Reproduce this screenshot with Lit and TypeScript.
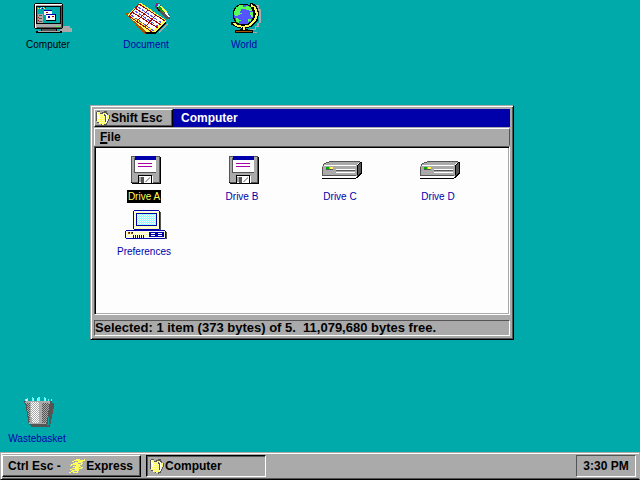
import { LitElement, html, css, svg, nothing } from "lit";
import { customElement, property } from "lit/decorators.js";

const px = (fill: string, d: string) => svg`<path fill=${fill} d=${d}></path>`;

// Every other pixel of the icon grid, used for two-colour dithering.
let checker = "";
for (let y = 0; y < 32; y++) {
  for (let x = y % 2; x < 48; x += 2) checker += `M${x} ${y}h1v1h-1z`;
}

const dither = (id: string, a: string, b: string, d: string) => svg`
  <clipPath id=${id}><path d=${d}></path></clipPath>
  <path fill=${a} d=${d}></path>
  <path fill=${b} d=${checker} clip-path="url(#${id})"></path>
`;

const floppy = svg`
  ${px("#000", "M12 28H40V2H41V29H12ZM11 27H12V28H11Z")}
  ${px("#555", "M11 1H40V28H12V27H11Z")}
  ${px("#aaa", "M12 2H39V27H12Z")}
  ${px("#555", "M14 3H15V18H14ZM15 17H36V18H15Z")}
  ${px("#00a", "M15 1H36V5H15Z")}
  ${px("#fdfdfd", "M15 5H36V17H15Z")}
  ${px("#a0a", "M18 8H32V9H18ZM18 11H32V12H18Z")}
  ${px("#000", "M18 20H32V21H18ZM18 20H19V28H18ZM31 20H32V28H31Z")}
  ${px("#fff", "M19 21H31V28H19ZM32 21H33V28H32Z")}
  ${px("#555", "M21 22H24V28H21Z")}
  ${px("#aaa", "M25 26H26V25H27V24H28V23H29V22H30V24H29V25H28V26H27V27H25ZM19 22H21V27H19Z")}
`;

const drive = svg`
  ${px("#555", "M13 6H44V7H13ZM10 7H13V8H10ZM8 8H10V9H8ZM7 9H8V11H7ZM6 12H7V21H6Z")}
  ${px("#aaa", "M13 7H44V8H42V9H41V22H7V12H6V11H8V9H10V8H13Z")}
  ${px("#fff", "M8 10H40V11H8ZM20 14H39V15H20ZM20 17H39V18H20ZM7 21H41V22H7ZM41 20H42V19H43V18H44V19H43V20H42V21H41Z")}
  ${px("#555", "M42 9H43V8H45V18H44V19H43V20H42V21H41V10H42ZM20 15H39V16H20ZM6 20H40V21H6Z")}
  ${px("#000", "M6 23H42V22H43V21H44V20H45V19H46V7H44V8H45V18H44V19H43V20H42V21H41V22H40V24H6ZM41 10H42V9H43V8H44V9H43V10H42V20H41Z")}
  ${px("#0a0", "M10 12H13V14H10Z")}
  ${px("#ff5", "M14 12H17V14H14Z")}
  ${px("#555", "M10 14H17V15H10Z")}
`;

const preferences = svg`
  ${px("#555", "M15 19H40V2H41V20H15ZM7 29H47V22H46V28H7Z")}
  ${px("#00a", "M14 0H39V1H40V19H39V20H34V21H19V20H14V19H13V1H14Z")}
  ${dither("case", "#fdfdfd", "#ffffaa", "M14 1H39V19H14Z")}
  ${px("#00a", "M16 3H37V16H16Z")}
  ${dither("screen", "#fdfdfd", "#88ffff", "M17 4H36V15H17Z")}
  ${px("#00a", "M6 20H45V21H46V28H45V29H6V28H5V21H6Z")}
  ${dither("base", "#fdfdfd", "#ffffaa", "M6 21H45V28H6Z")}
  ${px("#a50", "M8 22H10V24H8ZM11 22H13V24H11Z")}
  ${px("#000", "M9 22H10V23H9ZM12 22H13V23H12Z")}
  ${px("#00a", "M13 25H14V28H13ZM15 25H16V28H15ZM17 25H18V28H17ZM19 25H20V28H19ZM21 25H22V28H21ZM23 25H24V28H23ZM29 22H44V27H29Z")}
  ${px("#fff", "M31 23H35V24H31ZM38 23H42V24H38ZM31 25H35V26H31ZM38 25H42V26H38Z")}
`;

const computer = svg`
  ${px("#aaa", "M39 23H46V25H48V29H36V25H39Z")}
  ${px("#000", "M11 0H38V1H39V25H38V26H33V28H38V30H12V28H17V26H11V25H10V1H11Z")}
  ${px("#aaa", "M12 1H38V25H12ZM14 28H36V29H14Z")}
  ${px("#fff", "M11 1H38V2H12V25H11Z")}
  ${px("#555", "M13 24H38V25H13ZM18 26H32V28H18ZM37 2H38V25H37Z")}
  ${px("#000", "M12 3H37V21H12Z")}
  ${px("#0aa", "M13 4H36V20H13Z")}
  ${px("#ff5", "M14 5H15V6H14ZM17 4H18V5H17ZM20 5H21V6H20Z")}
  ${px("#00a", "M15 4H16V5H15ZM18 5H19V6H18ZM21 4H22V5H21Z")}
  ${px("#fff", "M16 5H17V6H16ZM19 4H20V5H19Z")}
  ${px("#aaa", "M14 11H19V20H14Z")}
  ${px("#555", "M15 12H18V13H15ZM15 15H18V16H15ZM15 18H18V19H15Z")}
  ${px("#a00", "M14 14H15V15H14ZM14 17H15V18H14Z")}
  ${px("#fff", "M20 7H28V12H20ZM22 11H31V17H22Z")}
  ${px("#00a", "M20 7H28V8H20ZM22 11H32V12H22ZM24 13H26V15H24Z")}
  ${px("#a00", "M22 9H24V10H22ZM28 13H30V14H28Z")}
  ${px("#000", "M22 17H32V18H22ZM31 12H32V18H31Z")}
  ${px("#5f5", "M32 23H35V24H32Z")}
`;

const documentIcon = svg`
  ${px("#aaa", "M36 29L46 19V21L38 30ZM40 4L49 14V16H44Z")}
  ${px("#a50", "M2 10H8L24 29V31H22L14 22L8 15Z")}
  ${px("#000", "M23 29H33L44 18V20L34 31H24Z")}
  ${px("#ff5", "M5 12L17 0H19L44 17V18L33 29H25Z")}
  ${px("#fdfdfd", "M8 12L17 2L41 17L32 27Z")}
  <path fill="none" stroke="#a00" d="M17 1L43 18M13 5L39 22M10 9L36 25M7 13L30 29M17 1L7 13M26 7L15 18M34 12L23 24"></path>
  <path fill="none" stroke="#55f" stroke-dasharray="3 2" d="M16 4L40 20M13 8L37 24M9 12L32 28"></path>
  ${px("#555", "M34 0H38V2L44 8L49 14V16H45L37 9L33 4Z")}
  ${px("#a0a", "M34 1H36V3H34Z")}
  ${px("#5ff", "M36 1H38V3L35 5V3H36Z")}
  ${px("#000", "M35 4H36V6H37V7H38V8H36V6H35Z")}
  ${px("#0a0", "M36 4L38 3L43 9L41 10Z")}
  ${px("#ff5", "M38 3L39 3L45 9L43 10Z")}
  ${px("#fff", "M43 10L45 9L48 14L46 14Z")}
`;

const world = svg`<g transform="translate(1 0)">
  ${px("#aaa", "M34 2H38V6H40V20H38V24H35V27H29V26H34V23H36V20H38V8H36V4H34ZM22 29H36V30H22Z")}
  ${px("#000", "M18 1H27V2H29V3H31V5H32V7H33V15H32V17H31V19H29V21H27V22H18V21H16V20H14V18H13V16H12V7H13V5H14V4H15V3H16V2H18Z")}
  ${px("#55f", "M18 2H27V3H29V4H30V6H31V8H32V15H31V17H30V19H28V20H27V21H18V20H16V19H15V17H14V15H13V8H14V6H15V4H17V3H18Z")}
  ${px("#5f5", "M18 2H22V4H24V6H20V8H19V10H21V11H19V12H17V13H14V12H13V8H14V6H15V4H17V3H18ZM25 3H28V4H30V6H31V8H28V7H25V6H24V4H25ZM29 9H32V14H30V12H29ZM15 15H17V16H18V17H20V18H18V20H17V19H15ZM27 16H30V18H28V19H27Z")}
  <path fill="none" stroke="#000" stroke-width="4" d="M29 1L34 4L36 10L35 17L30 22L23 24L17 23L12 20"></path>
  <path fill="none" stroke="#ff5" stroke-width="2" d="M30 2L34 5L36 11L34 17L29 22L23 24L17 23L12 20"></path>
  <path fill="none" stroke="#000" stroke-width="1" d="M32 4L34 10L32 17L28 21L23 22"></path>
  ${px("#000", "M10 19H14V20H12V22H10ZM21 24H25V26H27V27H19V26H21ZM14 27H32V30H14Z")}
  ${px("#ff5", "M22 24H24V27H22Z")}
  ${px("#a50", "M15 28H31V29H15Z")}
</g>`;

const basket = svg`
  ${px("#555", "M36 6H41V12H40V17H39V22H38V27H37V30H18V28H36Z")}
  ${px("#5ff", "M14 1H15V4H14ZM19 0H20V4H19ZM25 0H27V4H25ZM31 0H32V4H31ZM35 2H36V5H35ZM38 2H39V5H38ZM12 2H13V4H12Z")}
  ${px("#fff", "M13 2H14V4H13ZM20 1H21V4H20ZM24 1H25V4H24ZM32 1H33V4H32Z")}
  ${px("#555", "M11 4H39V6H38V8H37V14H36V20H35V27H34V28H16V26H15V20H14V14H13V8H12V6H11Z")}
  ${px("#aaa", "M13 4H37V7H36V14H35V20H34V26H33V27H16V20H15V14H14V8H13V6H12V5H13Z")}
  ${dither("light", "#fdfdfd", "#aaa", "M18 5H26V26H19V20H18Z")}
  ${dither("shade", "#aaa", "#555", "M29 6H36V14H35V20H34V26H29ZM13 6H17V26H16V20H15V14H14V8H13Z")}
`;

const folder = svg`
  ${px("#555", "M1 2H2V1H5V3H7V2H9V1H12V3H13V5H15V9H14V11H13V13H12V15H10V16H9V15H6V14H4V13H2V11H1Z")}
  ${dither("paper", "#ffffaa", "#ffff55", "M2 2H5V4H8V3H11V14H9V15H7V14H4V12H2Z")}
  ${px("#ff5", "M12 5H14V9H13V11H12Z")}
  ${px("#fff", "M2 2H3V5H4V8H5V11H4V9H3V6H2ZM11 4H12V13H11Z")}
  ${px("#555", "M9 4H10V5H11V12H10V6H9Z")}
`;

const express = svg`
  ${px("#ff5", "M7 1H11V2H15V1H16V3H14V4H9V3H5V4H3V3H5V2H7ZM4 5H9V6H12V5H14V6H13V7H11V8H7V7H3V8H1V7H2V6H4ZM6 9H10V10H12V9H14V10H13V11H10V12H6V11H3V12H1V11H3V10H6ZM2 13H5V14H8V13H9V15H4V14H2V15H0V14H2Z")}
  ${px("#ff5", "M6 4H13V5H6ZM4 8H12V9H4ZM3 12H10V13H3Z")}
`;

const pictures: Record<string, unknown> = {
  floppy, drive, preferences, computer, document: documentIcon, world, basket, folder, express,
};

@customElement("pixel-icon")
class PixelIcon extends LitElement {
  @property() name = "";
  @property({ type: Boolean }) small = false;

  static styles = css`
    :host { display: block; flex: none; }
    svg { display: block; shape-rendering: crispEdges; }
  `;

  render() {
    const w = this.small ? 16 : 48;
    const h = this.small ? 16 : 32;
    return html`<svg width=${w} height=${h} viewBox="0 0 ${w} ${h}" aria-hidden="true">
      ${pictures[this.name] ?? nothing}
    </svg>`;
  }
}

@customElement("icon-item")
class IconItem extends LitElement {
  @property() icon = "";
  @property() label = "";
  @property({ type: Boolean }) selected = false;
  @property({ type: Boolean }) dark = false;

  static styles = css`
    :host { display: block; }
    .item {
      display: flex; flex-direction: column; align-items: center; gap: 3px;
      width: 100%; margin: 0; padding: 0; border: 0; background: none;
      font: 10px/12px "Liberation Sans", sans-serif; color: #0000aa;
    }
    .label { white-space: nowrap; padding: 1px 1px 0; }
    .dark { color: #000; }
    .selected { background: #000; color: #ffff55; }
  `;

  render() {
    const tone = this.selected ? "label selected" : this.dark ? "label dark" : "label";
    return html`<button class="item">
      <pixel-icon name=${this.icon}></pixel-icon>
      <span class=${tone}>${this.label}</span>
    </button>`;
  }
}

@customElement("app-root")
class AppRoot extends LitElement {
  static styles = css`
    :host {
      display: flex; flex-direction: column; height: 100vh; overflow: hidden;
      background: #00aaaa; color: #000;
      font: bold 12px/16px "Liberation Sans", sans-serif;
      cursor: default;
    }
    button { font: inherit; color: inherit; margin: 0; text-align: left; }
    .desktop { position: relative; flex: 1; min-height: 0; }
    .shortcuts { display: flex; gap: 2px; padding-top: 3px; }
    .shortcuts icon-item { width: 96px; }
    .bin { position: absolute; left: 0; bottom: 7px; width: 74px; }

    .window {
      position: absolute; inset: 105px 126px 112px 90px; box-sizing: border-box;
      display: flex; flex-direction: column;
      padding: 3px; background: #aaa;
      border: 1px solid; border-color: #aaa #000 #000 #aaa;
      box-shadow: inset 1px 1px #fff, inset -1px -1px #555;
    }
    .titlebar { display: flex; height: 18px; margin-bottom: 1px; }
    .control {
      display: flex; align-items: center; box-sizing: border-box; width: 79px; padding: 0;
      background: #aaa; border: 1px solid; border-color: #fff #000 #000 #fff;
      box-shadow: inset -1px -1px #555; white-space: nowrap;
    }
    .title {
      flex: 1; margin: 0; padding-left: 8px; background: #0000aa; color: #fff;
      font: inherit; line-height: 18px;
    }
    .menubar {
      display: flex; height: 16px; border: 1px solid;
      border-color: #fff #555 transparent #fff;
    }
    .menu { padding: 0 5px; border: 0; background: none; }
    .key { text-decoration: underline; text-decoration-thickness: 2px; text-underline-offset: 1px; }
    .pane {
      flex: 1; min-height: 0; background: #fdfdfd;
      border: 1px solid; border-color: #555 #fff #fff #555;
      box-shadow: inset 1px 1px #000, inset -1px -1px #aaa;
      display: flex; flex-wrap: wrap; align-content: flex-start;
      gap: 7px 2px; padding: 8px 1px 1px 1px;
    }
    .pane icon-item { width: 96px; }
    .status {
      height: 14px; margin-top: 5px; font-size: 13px; line-height: 14px;
      border: 1px solid; border-color: #555 #fff #fff #555; white-space: pre;
    }

    .taskbar {
      display: flex; align-items: center; gap: 5px; height: 28px; box-sizing: border-box;
      padding: 1px 3px 1px 1px; background: #aaa;
      border: 1px solid; border-color: #aaa #aaa #000 #aaa;
      box-shadow: inset 1px 1px #fff, inset 0 -1px #555;
    }
    .start, .task, .clock { box-sizing: border-box; height: 22px; border: 1px solid; white-space: nowrap; }
    .start, .task { display: flex; align-items: center; background: #aaa; }
    .start {
      width: 139px; padding: 0 7px 0 5px; gap: 1px; border-color: #fff #000 #000 #fff;
      box-shadow: inset -1px -1px #555;
    }
    .hint { flex: 1; }
    .task {
      width: 120px; padding: 0 2px; border-color: #000 #fff #fff #000;
      box-shadow: inset 1px 1px #555;
    }
    .clock {
      margin-left: auto; width: 60px; text-align: center; line-height: 20px;
      border-color: #555 #fff #fff #555;
    }
  `;

  private items = [
    { icon: "floppy", label: "Drive A", selected: true },
    { icon: "floppy", label: "Drive B" },
    { icon: "drive", label: "Drive C" },
    { icon: "drive", label: "Drive D" },
    { icon: "preferences", label: "Preferences" },
  ];

  render() {
    return html`
      <main class="desktop">
        <nav class="shortcuts" aria-label="Desktop">
          <icon-item icon="computer" label="Computer" dark></icon-item>
          <icon-item icon="document" label="Document"></icon-item>
          <icon-item icon="world" label="World"></icon-item>
        </nav>
        <icon-item class="bin" icon="basket" label="Wastebasket"></icon-item>
        <section class="window" aria-label="Computer">
          <header class="titlebar">
            <button class="control"><pixel-icon name="folder" small></pixel-icon>Shift Esc</button>
            <h1 class="title">Computer</h1>
          </header>
          <div class="menubar">
            <button class="menu"><span class="key">F</span>ile</button>
          </div>
          <div class="pane">
            ${this.items.map((i) => html`<icon-item icon=${i.icon} label=${i.label} ?selected=${i.selected}></icon-item>`)}
          </div>
          <div class="status">Selected: 1 item (373 bytes) of 5.  11,079,680 bytes free.</div>
        </section>
      </main>
      <footer class="taskbar">
        <button class="start"><span class="hint">Ctrl Esc -</span><pixel-icon name="express" small></pixel-icon>Express</button>
        <button class="task"><pixel-icon name="folder" small></pixel-icon>Computer</button>
        <time class="clock" datetime="15:30">3:30 PM</time>
      </footer>
    `;
  }
}
